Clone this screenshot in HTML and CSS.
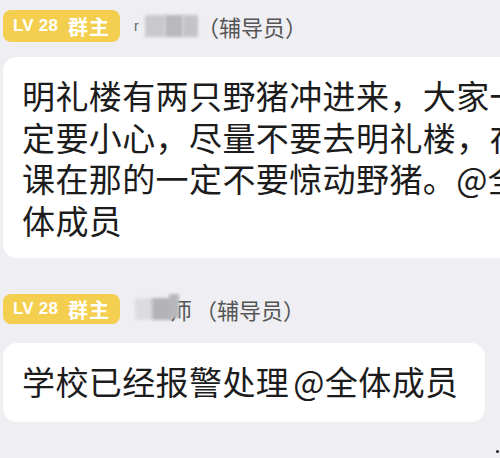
FILE: index.html
```html
<!DOCTYPE html>
<html>
<head>
<meta charset="utf-8">
<title>群聊</title>
<link rel="stylesheet" href="styles.css">
</head>
<body>
<div class="chat">
	<div class="msg_head">
		<span class="badge"><span class="lv">LV 28</span><span class="role">群主</span></span>
		<span class="nick">
			<span class="frag">r</span>
			<span class="mask mask_a"></span><span class="mask mask_b"></span><span class="mask mask_c"></span>
		</span>
		<span class="tag">（辅导员）</span>
	</div>
	<div class="bubble bubble_wide">明礼楼有两只野猪冲进来，大家一<br>定要小心，尽量不要去明礼楼，在<br>课在那的一定不要惊动野猪。@全<br>体成员</div>

	<div class="msg_head msg_head2">
		<span class="badge"><span class="lv">LV 28</span><span class="role">群主</span></span>
		<span class="nick nick2">
			<span class="mask mask_d"></span><span class="last">师</span>
		</span>
		<span class="tag">（辅导员）</span>
	</div>
	<div class="bubble bubble_short">学校已经报警处理<span class="at">@</span>全体成员</div>
</div>
<i class="dot"></i>
</body>
</html>
```
FILE: styles.css
```css
html,body{margin: 0;height: 100%;}
body{background: #efeff3;overflow: hidden;font-family: "Noto Sans CJK SC","Noto Sans",sans-serif;position: relative;}
.chat{padding: 10px 0 0 3px;}

.msg_head{display: flex;align-items: center;height: 32px;}
.msg_head2{margin-top: 36px;height: 30px;}
.badge{display: flex;align-items: center;width: 117px;height: 100%;box-sizing: border-box;padding: 0 0 0 10px;background: #f4cf4f;border-radius: 8px;color: #fff;font-weight: bold;}
.lv{font-family: "Liberation Sans",sans-serif;font-size: 17px;letter-spacing: 0.2px;}
.role{font-size: 20px;margin-left: 10px;letter-spacing: 1px;}

.nick{display: flex;align-items: center;margin-left: 14px;height: 22px;position: relative;}
.frag{font-size: 14px;color: #666;font-family: "Liberation Sans",sans-serif;width: 11px;}
.mask{display: inline-block;height: 22px;filter: blur(1.5px);}
.mask_a{width: 20px;background: #c9c9cd;}
.mask_b{width: 18px;background: #b9b9bd;}
.mask_c{width: 15px;background: #c4c4c8;}
.nick2{margin-left: 15px;}
.mask_d{width: 38px;background: linear-gradient(90deg,#dcdce0 0,#dcdce0 40%,#b3b3b7 50%,#b3b3b7 100%);}
.last{font-size: 23px;color: #555;margin-left: -4px;position: relative;}
.last:before{content: "";position: absolute;left: 0;top: 2px;width: 10px;height: 24px;background: #b8b8bc;filter: blur(1.5px);}
.tag{font-size: 22px;color: #555;margin-left: -1px;}
.msg_head2 .tag{margin-left: 3px;}

.bubble{background: #fff;border-radius: 14px;font-size: 33px;letter-spacing: 0.4px;line-height: 41.5px;color: #1c1c1c;white-space: nowrap;box-sizing: border-box;}
.bubble_wide{margin-top: 15px;width: 560px;padding: 18px 19px 17px;}
.bubble_short{margin-top: 19px;width: 482px;padding: 18px 19px 19px;}
.at{margin: 0 0 0 4px;}

.dot{position: absolute;right: 1px;bottom: 5px;width: 3px;height: 3px;border-radius: 50%;background: #222;}
```
